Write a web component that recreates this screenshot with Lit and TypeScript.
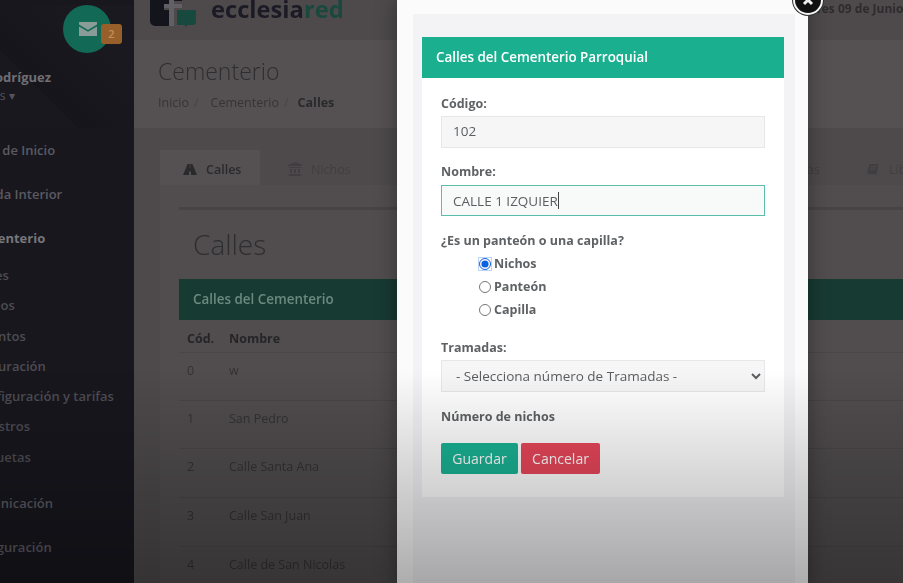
import {LitElement, css, html, svg} from 'lit';
import {customElement} from 'lit/decorators.js';

const navTop = [
  {label: 'Panel de Inicio', cls: ''},
  {label: 'Agenda Interior', cls: ''},
  {label: 'Cementerio', cls: 'current'},
];
const navChildren = ['Calles', 'Nichos', 'Difuntos', 'Facturación', 'Configuración y tarifas', 'Registros', 'Etiquetas'];
const navBottom = ['Comunicación', 'Configuración'];

const rows = [
  {code: '0', name: 'w', height: 48},
  {code: '1', name: 'San Pedro', height: 48},
  {code: '2', name: 'Calle Santa Ana', height: 49},
  {code: '3', name: 'Calle San Juan', height: 49},
  {code: '4', name: 'Calle de San Nicolas', height: 48},
];

const roadIcon = svg`<path d="M4.6 1h2.2L6.6 4.5h.8L7.2 1h2.2L14 12H8.1l-.2-3.4H6.1L5.9 12H0z"/>`;
const bankIcon = svg`<path d="M7 0l7 3v1H0V3zM1 5h12v1H1zM2 7h2v4H2zM6 7h2v4H6zM10 7h2v4h-2zM1 12h12v2H1z"/>`;
const bookIcon = svg`<path d="M3 1h10l-2 11H2a1.5 1.5 0 0 1-1-2zM4.6 3.5l-.2 1h6l.2-1zM4.2 6l-.2 1h6l.2-1z"/>`;

@customElement('app-root')
export class AppRoot extends LitElement {
  static styles = css`
    :host {
      display: block;
      position: relative;
      width: 903px;
      height: 583px;
      overflow: hidden;
      background: linear-gradient(90deg, #18171e 134px, #4e4a4c 134px);
      font-family: 'Open Sans', 'Liberation Sans', sans-serif;
      font-size: 13px;
    }
    .page {
      display: flex;
      height: 583px;
      filter: blur(0.7px);
    }

    /* sidebar, scrolled partly out of the frame */
    .sidebar {
      flex: 0 0 134px;
      overflow: hidden;
      background: #18171e;
      color: #5c5a62;
      font-weight: 600;
      white-space: nowrap;
    }
    .profile {
      position: relative;
      height: 123px;
      background: linear-gradient(45deg, #19181f 0%, #19181f 30%, #16151b 30.5%, #1a1920 75%);
    }
    .avatar {
      display: flex;
      align-items: center;
      justify-content: center;
      width: 48px;
      height: 48px;
      margin: 5px 0 0 63px;
      border-radius: 50%;
      background: #126a56;
    }
    .avatar svg {
      margin-left: 1px;
    }
    .badge {
      position: absolute;
      left: 101px;
      top: 19px;
      width: 21px;
      height: 20px;
      border-radius: 3px;
      background: #97602a;
      color: #c2905a;
      font-size: 11px;
      line-height: 20px;
      text-align: center;
    }
    .name {
      margin: 15px 0 0 -55px;
      color: #6f6e74;
      font-weight: 700;
      line-height: 18px;
    }
    .role {
      margin: 1px 0 0 -47px;
      color: #55535b;
      font-size: 12px;
      line-height: 18px;
      font-weight: 400;
    }
    .nav-row {
      height: 44px;
      line-height: 44px;
      margin-left: -36px;
    }
    .nav-row.current {
      margin-left: -31px;
      color: #77767b;
      font-weight: 700;
    }
    .children {
      margin-bottom: 9px;
    }
    .child {
      height: 30.3px;
      line-height: 30px;
      margin-left: -28px;
      color: #4d4c53;
    }

    /* main column */
    .main {
      flex: 0 0 800px;
      color: #2b2a2c;
    }
    .topbar {
      position: relative;
      height: 40px;
    }
    .logo {
      display: flex;
      gap: 14px;
      margin-left: 16px;
    }
    .logo svg {
      margin-top: -14px;
      flex: none;
    }
    .logo-text {
      margin-top: -9px;
      color: #1c1b25;
      font-size: 23.7px;
      font-weight: 700;
      line-height: 36px;
    }
    .logo-text span {
      color: #19483d;
    }
    .date {
      position: absolute;
      left: 662px;
      top: 0;
      color: #2d2b2d;
      font-size: 12px;
      font-weight: 700;
      line-height: 17px;
      white-space: nowrap;
    }
    .heading {
      height: 88px;
      padding: 18px 0 0 24px;
      box-sizing: border-box;
      background: #555153;
    }
    .heading h1 {
      margin: 0;
      color: #2e2d30;
      font-size: 23px;
      font-weight: 300;
      line-height: 27px;
    }
    .crumbs {
      display: flex;
      gap: 5px;
      margin-top: 10px;
      color: #363437;
      font-size: 12.5px;
      line-height: 16px;
    }
    .crumbs i {
      margin-right: 7px;
      font-style: normal;
      color: #474446;
    }
    .crumbs i:last-of-type {
      margin-right: 4px;
    }
    .crumbs b {
      font-weight: 700;
      color: #2a292c;
    }
    .content {
      padding: 22px 0 0 26px;
    }
    .tabs {
      display: flex;
      height: 35px;
      color: #3f3c3f;
      font-size: 12.5px;
      font-weight: 600;
    }
    .tab {
      display: flex;
      align-items: center;
      gap: 9px;
      padding: 3px 0 0 23px;
      width: 100px;
      box-sizing: border-box;
      white-space: nowrap;
    }
    .tab svg {
      fill: currentColor;
      flex: none;
    }
    .tab.active {
      background: #555153;
      color: #2a292c;
    }
    .tab.mid {
      padding-left: 28px;
      color: #413e41;
      font-weight: 400;
    }
    .tab.hidden-tab {
      justify-content: flex-end;
      width: 460px;
      padding-left: 0;
      color: #413e41;
      font-weight: 400;
    }
    .tab.far {
      margin-left: 46px;
      padding-left: 0;
      color: #413e41;
      font-weight: 400;
    }
    .panel {
      padding: 22px 0 0 19px;
      background: #514d4f;
    }
    .panel hr {
      margin: 0;
      border: 0;
      border-top: 3px solid #474446;
    }
    .panel h2 {
      margin: 16px 0 16px 14px;
      color: #2e2d30;
      font-size: 28px;
      font-weight: 300;
      line-height: 37px;
    }
    .bar {
      height: 41px;
      padding-left: 14px;
      background: #173a32;
      color: #6a8a80;
      font-size: 13.4px;
      font-weight: 600;
      line-height: 40px;
    }
    .table-row {
      display: grid;
      grid-template-columns: 42px 1fr;
      padding: 9px 0 0 8px;
      box-sizing: border-box;
      border-bottom: 1px solid #4a4648;
      line-height: 18px;
      font-size: 12.5px;
      color: #343234;
    }
    .table-row.head {
      height: 33px;
      padding-top: 10px;
      font-weight: 700;
      color: #252426;
    }

    /* modal */
    .modal {
      position: absolute;
      left: 397px;
      top: -2px;
      width: 411px;
      height: 590px;
      padding: 16px 13px 0 16px;
      box-sizing: border-box;
      background: #fbfbfc;
      box-shadow: 0 0 20px rgba(0, 0, 0, 0.35);
      filter: blur(0.35px);
    }
    .modal-inner {
      height: 100%;
      padding: 23px 11px 0 9px;
      box-sizing: border-box;
      background: #f3f3f6;
    }
    .card-title {
      height: 41px;
      padding-left: 14px;
      background: #1ab08f;
      color: #fff;
      font-size: 13.4px;
      font-weight: 600;
      line-height: 40px;
    }
    .card-body {
      height: 419px;
      padding: 17px 19px 0;
      box-sizing: border-box;
      background: #fff;
      color: #676a6c;
    }
    label, .label {
      display: block;
      font-size: 12.5px;
      font-weight: 700;
      line-height: 18px;
      color: #5f6264;
    }
    .field {
      display: flex;
      align-items: center;
      height: 32px;
      margin: 3px 0 15px;
      padding: 0 0 2px 11px;
      box-sizing: border-box;
      border: 1px solid #e7e7e9;
      background: #f6f6f7;
      font-size: 13.5px;
      color: #5b5e60;
    }
    .field.focus {
      height: 31px;
      margin: 4px 0 16px;
      padding-bottom: 0;
      border: 1.5px solid #5cbdaa;
      background: #f8f9f9;
    }
    .caret {
      width: 1px;
      height: 17px;
      background: #444;
    }
    .radios {
      padding: 2px 0 0 38px;
      margin-bottom: 17px;
    }
    .radio {
      display: flex;
      align-items: center;
      gap: 3px;
      height: 23.2px;
      font-size: 12.5px;
      font-weight: 700;
      color: #5f6264;
    }
    .radio input {
      width: 12px;
      height: 12px;
      margin: 0;
      accent-color: #0f62dd;
    }
    .radio input:checked {
      border-radius: 50%;
      box-shadow: 0 0 0 1px #bcd4f7;
    }
    select {
      display: block;
      width: 100%;
      height: 32px;
      margin: 3px 0 16px;
      padding-left: 10px;
      box-sizing: border-box;
      border: 1px solid #e7e7e9;
      border-radius: 0;
      background: #f6f6f7;
      font-family: inherit;
      font-size: 13.5px;
      color: #5b5e60;
    }
    .actions {
      display: flex;
      gap: 3px;
      margin-top: 17px;
    }
    button {
      height: 31px;
      padding: 0;
      border: 0;
      border-radius: 2px;
      color: #fff;
      font-family: inherit;
      font-size: 14px;
    }
    .save {
      width: 77px;
      background: #1ab394;
    }
    .cancel {
      width: 79px;
      background: #e8475a;
    }
    .close {
      position: absolute;
      left: 793px;
      top: -15px;
      display: flex;
      align-items: center;
      justify-content: center;
      width: 30px;
      height: 30px;
      box-sizing: border-box;
      border: 2px solid #f4f4f4;
      border-radius: 50%;
      background: #111;
      box-shadow: 0 0 0 1px #333;
    }

    /* dims everything towards the bottom of the frame */
    .fade {
      position: absolute;
      inset: 370px 0 0;
      background: linear-gradient(rgba(0, 0, 0, 0), rgba(0, 0, 0, 0.31));
      pointer-events: none;
    }
  `;

  render() {
    return html`
      <div class="page">
        <aside class="sidebar">
          <div class="profile">
            <div class="avatar">
              <svg width="18" height="14" viewBox="0 0 18 14">
                <path fill="#8a9c97" d="M0 0h18v2.6L9 8 0 2.6zM0 4.4l9 5.4 9-5.4V14H0z"/>
              </svg>
            </div>
            <div class="badge">2</div>
            <div class="name">Mario Rodríguez</div>
            <div class="role">Opciones ▾</div>
          </div>
          ${navTop.map((n) => html`<div class="nav-row ${n.cls}">${n.label}</div>`)}
          <div class="children">
            ${navChildren.map((c) => html`<div class="child">${c}</div>`)}
          </div>
          ${navBottom.map((n) => html`<div class="nav-row">${n}</div>`)}
        </aside>

        <main class="main">
          <div class="topbar">
            <div class="logo">
              <svg width="47" height="41" viewBox="0 0 47 41">
                <path fill="#14141d" d="M0 0h32v15h-8v-4h-5v7h-5v6h5v16H5a5 5 0 0 1-5-5z"/>
                <path fill="#6f6f74" d="M19 11h5v7h8v4h-8v18h-5V22h-5v-4h5z" opacity="0.6"/>
                <path fill="#18493e" d="M27 24h19v12a3 3 0 0 1-3 3h-5l-3 3v-3h-8z"/>
              </svg>
              <div class="logo-text">ecclesia<span>red</span></div>
            </div>
            <div class="date">Jueves 09 de Junio</div>
          </div>
          <div class="heading">
            <h1>Cementerio</h1>
            <div class="crumbs">
              <span>Inicio</span><i>/</i><span>Cementerio</span><i>/</i><b>Calles</b>
            </div>
          </div>
          <div class="content">
            <div class="tabs">
              <div class="tab active">
                <svg width="14" height="12" viewBox="0 0 14 12">${roadIcon}</svg>Calles
              </div>
              <div class="tab mid">
                <svg width="14" height="14" viewBox="0 0 14 14">${bankIcon}</svg>Nichos
              </div>
              <div class="tab hidden-tab">Etiquetas</div>
              <div class="tab far">
                <svg width="14" height="13" viewBox="0 0 14 14">${bookIcon}</svg>Libros
              </div>
            </div>
            <div class="panel">
              <hr />
              <h2>Calles</h2>
              <div class="bar">Calles del Cementerio</div>
              <div class="table">
                <div class="table-row head"><span>Cód.</span><span>Nombre</span></div>
                ${rows.map((r) => html`
                  <div class="table-row" style="height:${r.height}px">
                    <span>${r.code}</span><span>${r.name}</span>
                  </div>
                `)}
              </div>
            </div>
          </div>
        </main>
      </div>

      <section class="modal">
        <div class="modal-inner">
          <div class="card-title">Calles del Cementerio Parroquial</div>
          <div class="card-body">
            <label>Código:</label>
            <div class="field">102</div>
            <label>Nombre:</label>
            <div class="field focus">CALLE 1 IZQUIER<span class="caret"></span></div>
            <label>¿Es un panteón o una capilla?</label>
            <div class="radios">
              <div class="radio"><input type="radio" name="kind" checked />Nichos</div>
              <div class="radio"><input type="radio" name="kind" />Panteón</div>
              <div class="radio"><input type="radio" name="kind" />Capilla</div>
            </div>
            <label>Tramadas:</label>
            <select><option>- Selecciona número de Tramadas -</option></select>
            <div class="label">Número de nichos</div>
            <div class="actions">
              <button class="save">Guardar</button>
              <button class="cancel">Cancelar</button>
            </div>
          </div>
        </div>
      </section>
      <div class="close">
        <svg width="12" height="12" viewBox="0 0 12 12">
          <path stroke="#eee" stroke-width="3" d="M2 2l8 8M10 2l-8 8"/>
        </svg>
      </div>
      <div class="fade"></div>
    `;
  }
}
